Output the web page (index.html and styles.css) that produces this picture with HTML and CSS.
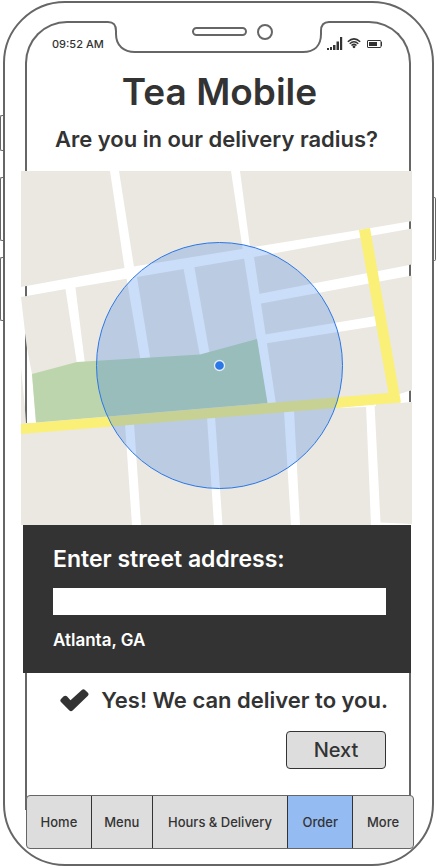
FILE: index.html
```html
<!DOCTYPE html>
<html lang="en">
<head>
<meta charset="utf-8">
<meta name="viewport" content="width=device-width, initial-scale=1">
<title>Tea Mobile</title>
<link rel="stylesheet" href="styles.css">
</head>
<body>
<div class="phone">
  <span class="side-key mute"></span>
  <span class="side-key volume-up"></span>
  <span class="side-key volume-down"></span>
  <span class="side-key power"></span>
  <div class="screen-edge"></div>
  <svg class="notch" viewBox="0 0 230 54" width="230" height="54" aria-hidden="true">
    <path d="M3 14H227V21C219 21 217 24 217 31C217 44 210 50 199 50H31C20 50 12 44 12 31C12 24 10 21 3 21Z" fill="#fff"/>
    <path d="M2 20H4C10 20 12 23 12 29V32C12 44 20 50 31 50H199C210 50 217 44 217 32V29C217 23 220 20 225 20H228" fill="none" stroke="#666" stroke-width="2"/>
    <rect x="89" y="26" width="53" height="7" rx="3.5" fill="#fff" stroke="#666" stroke-width="2"/>
    <circle cx="161" cy="30" r="7" fill="#fff" stroke="#666" stroke-width="2"/>
  </svg>
  <header class="status">
    <time>09:52 AM</time>
    <svg viewBox="0 0 56 14" width="56" height="14" aria-hidden="true">
      <g fill="#333">
        <path d="M0 11h2v2H0zM3 10h2v3H3zM6 8h2.500v5H6zM9.500 4.500H12v8.500H9.500zM13 0h2.200v13H13z"/>
        <circle cx="27" cy="9.800" r="1.400"/>
        <rect x="42" y="5" width="8" height="4"/>
        <path d="M54 5h1v4h-1z"/>
      </g>
      <g fill="none" stroke="#333">
        <path d="M20.800 4.700Q27-1 33.200 4.700M22.700 6.700Q27 2.800 31.300 6.700M24.500 8.500Q27 6.200 29.500 8.500" stroke-width="1.500"/>
        <path d="M41 3.500H53a1 1 0 0 1 1 1V9.500a1 1 0 0 1-1 1H41a.500.500 0 0 1-.500-.500V4a.500.500 0 0 1 .500-.500Z"/>
      </g>
    </svg>
  </header>
  <main>
    <h1>Tea Mobile</h1>
    <h2>Are you in our delivery radius?</h2>
    <svg class="map" viewBox="21 171 391 354" role="img" aria-label="Delivery radius map">
      <path fill="#ebe8e1" d="M21 171H412V525H21Z"/>
      <g fill="#fff">
        <path d="M110 171H119L134 267L137 277L150.500 360H140.500L126.500 278L124.500 268Z"/>
        <path d="M21 287L124.500 268L242 249L359 230L412 221V228.500L359 238L254 257L137 277L66 289L21 297Z"/>
        <path d="M65 286L75 284L85 364H77Z"/>
        <path d="M183 266L194 265L210 356H200Z"/>
        <path d="M231 171H240L250 247L254 257L276 404H267L244 258Z"/>
        <path d="M256 294.500L412 264.500V275.500L256 304.500Z"/>
        <path d="M262 335L376 316V326L262 344Z"/>
        <path d="M21 297L26.500 345L32 374L36 423H26.500L21 368Z"/>
        <path d="M398 394.500L412 390V402L400 403ZM336 408L376 404V406L366 407Z"/>
        <path d="M125 424L134 423L141 525H132ZM207 417L215 416L222.500 525H214ZM284 411L294 410L300 525H291ZM366 405L374.500 404L380.500 522.500L412 524V525H371Z"/>
      </g>
      <path fill="#666" d="M25 286.300L27 286V296L25 296.300ZM25 333L27 348V423H26L25 410ZM409 221.500L411 221.200V228.700L409 229ZM409 265L411 264.600V275.700L409 276ZM409 391L411 390.500V402L409 402Z"/>
      <path fill="#bcd5ac" d="M32 374L77 362L200 354.500L257 339L267.500 403L36 422.500Z"/>
      <path fill="#faef77" d="M359 230L370 228L401 402.500L21 434V424L388.500 393Z"/>
      <circle cx="219.500" cy="365.500" r="123" fill="#2a77e8" fill-opacity=".25" stroke="#2a77e8"/>
      <circle cx="219.500" cy="365.500" r="5" fill="#2a77e8" stroke="#e5edf8" stroke-width="1.300"/>
    </svg>
    <form class="address">
      <label for="street">Enter street address:</label>
      <input id="street" type="text">
      <p>Atlanta, GA</p>
    </form>
    <section class="result">
      <p class="answer">
        <svg viewBox="0 0 29 23" width="29" height="23" aria-hidden="true"><path fill="#333" d="M1 10L3.700 7.300Q5.300 6 6.900 7.300L10.500 11.200L21.800 1Q23.500-.300 25 1L27.900 3.800Q29.200 5.300 27.900 6.800L12.600 21.500Q11 22.800 9.400 21.500L1 13Q-.400 11.500 1 10Z"/></svg>
        <span>Yes! We can deliver to you.</span>
      </p>
      <button class="next" type="button">Next</button>
    </section>
  </main>
  <nav class="tabs">
    <a href="#home">Home</a>
    <a href="#menu">Menu</a>
    <a href="#delivery">Hours &amp; Delivery</a>
    <a href="#order" aria-current="page">Order</a>
    <a href="#more">More</a>
  </nav>
</div>
</body>
</html>
```
FILE: styles.css
```css
* {
  box-sizing: border-box;
}

body {
  margin: 0;
  padding: 1px 2px 1px 3px;
  background: #fff;
  color: #333;
  font-family: Inter, "Liberation Sans", sans-serif;
  font-weight: 500;
}

h1,
h2,
p {
  margin: 0;
  font-weight: 600;
}

.phone {
  position: relative;
  display: flex;
  flex-direction: column;
  min-height: calc(100vh - 2px);
  padding: 0 20px 15px 16px;
  border: 2px solid #666;
  border-radius: 62px;
  background: #fff;
}

.side-key {
  position: absolute;
  left: -5px;
  width: 4px;
  height: 64px;
  border: 1px solid #666;
  border-right: 0;
  border-radius: 2px 0 0 2px;
}

.mute {
  top: 112px;
  height: 36px;
}

.volume-up {
  top: 174px;
}

.volume-down {
  top: 254px;
}

.power {
  top: 194px;
  right: -4px;
  left: auto;
  border: 1px solid #666;
  border-left: 0;
  border-radius: 0 2px 2px 0;
}

.screen-edge {
  position: absolute;
  inset: 18px 21px 54px 20px;
  border: 2px solid #666;
  border-bottom: 0;
  border-radius: 42px 42px 0 0;
}

.notch {
  position: absolute;
  top: -1px;
  left: 50%;
  margin-left: -115px;
}

.status {
  position: relative;
  display: flex;
  align-items: center;
  justify-content: space-between;
  height: 14px;
  margin: 34px 29px 0 31px;
  font-size: 11px;
}

main {
  position: relative;
  flex: 1;
}

h1 {
  margin-top: 17px;
  padding-left: 6px;
  font-size: 37px;
  line-height: 48px;
  text-align: center;
}

h2 {
  margin-top: 7px;
  font-size: 22px;
  line-height: 32px;
  text-align: center;
}

.map {
  display: block;
  width: 100%;
  margin-top: 16px;
}

.address {
  display: flex;
  flex-direction: column;
  margin: 0 1px 0 2px;
  padding: 18px 25px 21px 30px;
  background: #333;
  color: #fff;
}

.address label {
  font-size: 23px;
  font-weight: 600;
  line-height: 32px;
}

.address input {
  height: 27px;
  margin: 13px 0;
  padding: 0 8px;
  border: 0;
  border-radius: 0;
  background: #fff;
  color: #333;
  font: inherit;
}

.address p {
  font-size: 17px;
  line-height: 24px;
}

.result {
  display: flex;
  flex-direction: column;
  align-items: flex-end;
  gap: 15px;
  padding: 11px 24px 26px;
}

.answer {
  display: flex;
  align-items: center;
  gap: 12px;
  font-size: 22px;
  line-height: 32px;
  white-space: nowrap;
}

.next {
  width: 100px;
  height: 38px;
  margin-right: 2px;
  padding: 0;
  border: 1px solid #333;
  border-radius: 4px;
  background: #ddd;
  color: #333;
  font: inherit;
  font-size: 20px;
}

.tabs {
  position: relative;
  display: grid;
  grid-template-columns: 64fr 61fr 136fr 65fr 61fr;
  height: 54px;
  margin: 0 -2px 0 5px;
  border: 1px solid #666;
  border-radius: 4px;
  background: #ddd;
  overflow: hidden;
}

.tabs a {
  display: flex;
  align-items: center;
  justify-content: center;
  color: #333;
  font-size: 13px;
  text-decoration: none;
  white-space: nowrap;
}

.tabs a + a {
  border-left: 1px solid #333;
}

.tabs a[aria-current] {
  background: #94bbf2;
}
```
